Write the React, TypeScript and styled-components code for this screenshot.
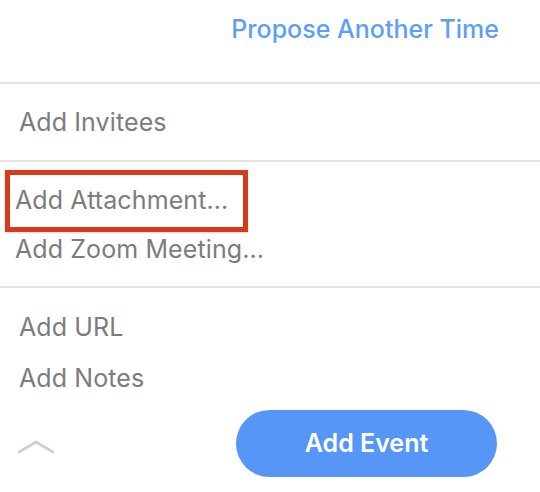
import React from "react";
import styled, { createGlobalStyle } from "styled-components";

const Global = createGlobalStyle`
  html, body { margin: 0; padding: 0; background: #ffffff; }
  body { font-family: Inter, "Liberation Sans", Arial, sans-serif; -webkit-font-smoothing: antialiased; }
`;

const Panel = styled.div`
  width: 540px;
  height: 492px;
  background: #ffffff;
  display: flex;
  flex-direction: column;
  overflow: hidden;
`;

const Header = styled.div`
  height: 82px;
  display: flex;
  justify-content: flex-end;
  align-items: flex-start;
  padding: 14px 41px 0 0;
  box-sizing: border-box;
`;

const LinkButton = styled.span`
  font-size: 25px;
  line-height: 30px;
  font-weight: 500;
  color: #5e9ef6;
  cursor: pointer;
`;

const Divider = styled.div`
  height: 2px;
  background: #e3e3e3;
  flex-shrink: 0;
`;

const Section = styled.div<{ $top: number; $bottom: number; $gap?: number }>`
  display: flex;
  flex-direction: column;
  gap: ${(p) => p.$gap ?? 0}px;
  padding: ${(p) => p.$top}px 0 ${(p) => p.$bottom}px;
`;

const Item = styled.div<{ $indent?: number }>`
  font-size: 25px;
  line-height: 30px;
  color: #7c7c7c;
  padding-left: ${(p) => p.$indent ?? 19}px;
  letter-spacing: 0.1px;
  white-space: nowrap;
`;

const Highlight = styled.div`
  align-self: flex-start;
  margin-left: 5px;
  width: 243px;
  height: 62px;
  box-sizing: border-box;
  border: 5px solid #d8391d;
  padding: 10px 0 0 5px;
  box-shadow: 0 1px 2px rgba(0, 0, 0, 0.15);
`;

const HighlightText = styled.div`
  font-size: 25px;
  line-height: 30px;
  color: #7c7c7c;
  letter-spacing: 0.1px;
  white-space: nowrap;
`;

const Footer = styled.div`
  display: flex;
  align-items: center;
  justify-content: space-between;
  padding: 17px 43px 0 18px;
`;

const Chevron = styled.svg`
  width: 36px;
  height: 14px;
  margin-top: 6px;
`;

const PrimaryButton = styled.button`
  width: 261px;
  height: 67px;
  border: none;
  border-radius: 34px;
  background: #5596f6;
  color: #ffffff;
  font-family: inherit;
  font-size: 25px;
  font-weight: 600;
  cursor: pointer;
  padding: 0 0 2px;
`;

export default function App() {
  return (
    <>
      <Global />
      <Panel>
        <Header>
          <LinkButton>Propose Another Time</LinkButton>
        </Header>
        <Divider />
        <Section $top={23} $bottom={23}>
          <Item>Add Invitees</Item>
        </Section>
        <Divider />
        <Section $top={8} $bottom={22} $gap={2}>
          <Highlight>
            <HighlightText>Add Attachment...</HighlightText>
          </Highlight>
          <Item $indent={15}>Add Zoom Meeting...</Item>
        </Section>
        <Divider />
        <Section $top={24} $bottom={0} $gap={21}>
          <Item>Add URL</Item>
          <Item>Add Notes</Item>
        </Section>
        <Footer>
          <Chevron viewBox="0 0 36 14">
            <polyline
              points="1,12 18,2 35,12"
              fill="none"
              stroke="#d0d0d0"
              strokeWidth="3"
              strokeLinecap="round"
              strokeLinejoin="round"
            />
          </Chevron>
          <PrimaryButton>Add Event</PrimaryButton>
        </Footer>
      </Panel>
    </>
  );
}
